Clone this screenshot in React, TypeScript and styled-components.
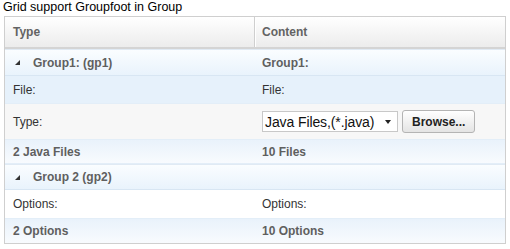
import React from "react";
import styled, { createGlobalStyle } from "styled-components";

const GlobalStyle = createGlobalStyle`
  html, body {
    margin: 0;
    padding: 0;
    background: #ffffff;
  }
  body {
    font-family: Arial, "Liberation Sans", sans-serif;
  }
`;

const Page = styled.div`
  width: 510px;
  height: 249px;
  overflow: hidden;
`;

const Title = styled.div`
  height: 16px;
  padding-left: 3px;
  font-size: 12.5px;
  line-height: 15px;
  color: #000000;
`;

const Grid = styled.div`
  margin-left: 4px;
  width: 500px;
  border: 1px solid #cfcfcf;
`;

const Row = styled.div<{ $bg: string; $h: number }>`
  display: grid;
  grid-template-columns: 249px 1fr;
  height: ${(p) => p.$h}px;
  background: ${(p) => p.$bg};
  border-bottom: 1px solid #e3eef8;
  align-items: center;
  box-sizing: border-box;

  &:last-child {
    border-bottom: none;
  }
`;

const HeadRow = styled(Row)`
  border-bottom: 2px solid #d4d4d4;
`;

const GroupRow = styled(Row)`
  border-top: 1px solid #e0eaf4;
  border-bottom: 1px solid #d8e6f3;
`;

const HeadCell = styled.div<{ $divider?: boolean }>`
  height: 100%;
  display: flex;
  align-items: center;
  padding-left: ${(p) => (p.$divider ? 7 : 8)}px;
  font-size: 12px;
  font-weight: bold;
  color: #636363;
  border-left: ${(p) => (p.$divider ? "1px solid #cfcfcf" : "none")};
  box-shadow: ${(p) => (p.$divider ? "inset 1px 0 0 #ffffff" : "none")};
`;

const Cell = styled.div<{ $bold?: boolean; $indent?: number }>`
  display: flex;
  align-items: center;
  gap: 4px;
  padding-left: ${(p) => p.$indent ?? 8}px;
  font-size: 12px;
  font-weight: ${(p) => (p.$bold ? "bold" : "normal")};
  color: ${(p) => (p.$bold ? "#5f5f5f" : "#333333")};
`;

const Toggle = styled.span`
  display: inline-block;
  width: 0;
  height: 0;
  margin: 0 9px 0 0;
  border-left: 5px solid transparent;
  border-bottom: 5px solid #333333;
`;

const Select = styled.div`
  width: 136px;
  height: 21px;
  box-sizing: border-box;
  border: 1px solid #c8c8c8;
  background: #ffffff;
  display: flex;
  align-items: center;
  justify-content: space-between;
  padding: 0 6px 0 2px;
  font-size: 14px;
  letter-spacing: -0.1px;
  color: #111111;
`;

const Caret = styled.span`
  width: 0;
  height: 0;
  border-left: 3px solid transparent;
  border-right: 3px solid transparent;
  border-top: 4px solid #222222;
`;

const Button = styled.button`
  height: 23px;
  padding: 0 9px;
  border: 1px solid #b4b4b4;
  border-radius: 3px;
  background: linear-gradient(#ffffff, #e4e4e4);
  font-family: Arial, "Liberation Sans", sans-serif;
  font-size: 12px;
  font-weight: bold;
  color: #222222;
`;

const headBg = "linear-gradient(#ffffff, #ececec)";
const groupBg = "linear-gradient(#fafdff, #e9f3fc)";
const footBg = "linear-gradient(#e9f2fb, #f8fbfe)";

export default function App() {
  return (
    <Page>
      <GlobalStyle />
      <Title>Grid support Groupfoot in Group</Title>
      <Grid>
        <HeadRow $bg={headBg} $h={32}>
          <HeadCell>Type</HeadCell>
          <HeadCell $divider>Content</HeadCell>
        </HeadRow>
        <GroupRow $bg={groupBg} $h={27}>
          <Cell $bold $indent={10}>
            <Toggle />
            Group1: (gp1)
          </Cell>
          <Cell $bold>Group1:</Cell>
        </GroupRow>
        <Row $bg="#e6f1fb" $h={28}>
          <Cell>File:</Cell>
          <Cell>File:</Cell>
        </Row>
        <Row $bg="#f7f7f7" $h={36}>
          <Cell>Type:</Cell>
          <Cell>
            <Select>
              Java Files,(*.java)
              <Caret />
            </Select>
            <Button>Browse...</Button>
          </Cell>
        </Row>
        <Row $bg={footBg} $h={24}>
          <Cell $bold>2 Java Files</Cell>
          <Cell $bold>10 Files</Cell>
        </Row>
        <GroupRow $bg={groupBg} $h={26}>
          <Cell $bold $indent={10}>
            <Toggle />
            Group 2 (gp2)
          </Cell>
          <Cell $bold />
        </GroupRow>
        <Row $bg="#ffffff" $h={29}>
          <Cell>Options:</Cell>
          <Cell>Options:</Cell>
        </Row>
        <Row $bg={footBg} $h={24}>
          <Cell $bold>2 Options</Cell>
          <Cell $bold>10 Options</Cell>
        </Row>
      </Grid>
    </Page>
  );
}
